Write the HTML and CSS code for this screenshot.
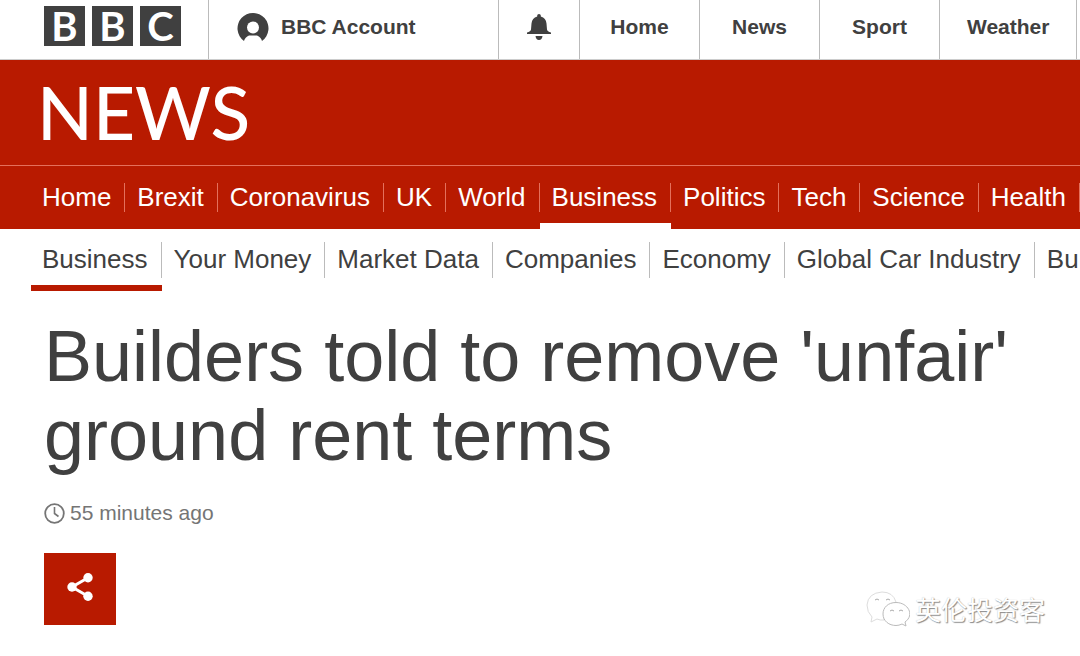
FILE: index.html
```
<!DOCTYPE html>
<html lang="en">
<head>
	<meta charset="utf-8">
	<meta name="viewport" content="width=device-width, initial-scale=1">
	<title>Builders told to remove 'unfair' ground rent terms - BBC News</title>
	<link rel="stylesheet" href="styles.css">
</head>

<body>
	<header>
		<div class="topbar">
			<a class="logo" href="#" aria-label="BBC">
				<span>B</span><span>B</span><span>C</span>
			</a>
			<a class="account" href="#">
				<svg width="32" height="30" viewBox="0 0 32 30" aria-hidden="true">
					<path fill="#404040" d="M7 29A15.500 15.500 0 1 1 25 29Q24 25 20 23.500H12Q8 25 7 29Z"/>
					<circle cx="16" cy="15.500" r="6" fill="#fff"/>
					<path fill="#fff" d="M9 30Q10 24 16 24T23 30Z"/>
				</svg>
				BBC Account
			</a>
			<a class="bell" href="#" aria-label="Notifications">
				<svg width="24" height="26" viewBox="0 0 24 26" aria-hidden="true">
					<path fill="#404040" d="M10.200 2.500V1.500Q10.200 0 12 0T13.800 1.500V2.500Q19 4 19.500 9.500L20 15.500Q20.300 17.500 24 18.500V20H0V18.500Q3.700 17.500 4 15.500L4.500 9.500Q5 4 10.200 2.500ZM8.500 22H15.500Q15 26 12 26T8.500 22Z"/>
				</svg>
			</a>
			<nav class="topnav">
				<a href="#">Home</a>
				<a href="#">News</a>
				<a href="#">Sport</a>
				<a href="#">Weather</a>
			</nav>
		</div>

		<div class="brand"><a href="#">NEWS</a></div>

		<nav class="nav primary">
			<a href="#">Home</a>
			<a href="#">Brexit</a>
			<a href="#">Coronavirus</a>
			<a href="#">UK</a>
			<a href="#">World</a>
			<a class="active" href="#">Business</a>
			<a href="#">Politics</a>
			<a href="#">Tech</a>
			<a href="#">Science</a>
			<a href="#">Health</a>
		</nav>

		<nav class="nav secondary">
			<a class="active" href="#">Business</a>
			<a href="#">Your Money</a>
			<a href="#">Market Data</a>
			<a href="#">Companies</a>
			<a href="#">Economy</a>
			<a href="#">Global Car Industry</a>
			<a href="#">Bu</a>
		</nav>
	</header>

	<main>
		<h1>Builders told to remove 'unfair' ground rent terms</h1>
		<p class="date">
			<svg width="21" height="21" viewBox="0 0 21 21" fill="none" stroke="#757575" aria-hidden="true">
				<circle cx="10.500" cy="10.500" r="9.300" stroke-width="1.800"/>
				<path stroke-width="1.600" d="M10.500 4V10.500L14.500 13.500"/>
			</svg>
			<time>55 minutes ago</time>
		</p>
		<button class="share" type="button" aria-label="Share">
			<svg width="26" height="28" viewBox="0 0 26 28" aria-hidden="true">
				<path fill="none" stroke="#fff" stroke-width="3" d="M21 4.700L5 14L21 23.300"/>
				<circle cx="21" cy="4.700" r="4.700" fill="#fff"/>
				<circle cx="5" cy="14" r="4.700" fill="#fff"/>
				<circle cx="21" cy="23.300" r="4.700" fill="#fff"/>
			</svg>
		</button>
	</main>

	<div class="watermark">
		<svg width="44" height="36" viewBox="0 0 44 36" fill="#fff" aria-hidden="true">
			<path stroke="#ddd" d="M6 26L5 31L11 28Q14 29.500 18 29Q16 15 30 11Q27 1 16 1Q2 2 1 14Q1 21 6 26Z"/>
			<path stroke="#bbb" d="M30 11.500C22 11.500 17 16.500 17 23C17 30 23 34.500 30 34.500Q33 34.500 36 33L40 35L39 31C49 24 42 11.500 30 11.500Z"/>
			<path fill="none" stroke="#aaa" d="M9 9Q11 7 13 9M20 9Q22 7 24 9M24 20Q26 18 28 20M33 20Q35 18 37 20"/>
		</svg>
		<span lang="zh">英伦投资客</span>
	</div>
</body>

</html>
```
FILE: styles.css
```
html {
	box-sizing: border-box;
}
*,
*::before,
*::after {
	box-sizing: inherit;
}

body {
	background-color: #fff;
	color: #404040;
	font-family: "Liberation Sans", Helvetica, Arial, sans-serif;
	font-size: 26px;
	margin: 0;
	overflow-x: hidden;
	position: relative;
}

a {
	color: inherit;
	text-decoration: none;
}

svg {
	display: block;
	flex: none;
}

/* Global bar */
.topbar {
	border-bottom: 1px solid #ccc;
	display: flex;
	font-size: 21px;
	font-weight: bold;
	height: 60px;
	overflow: hidden;
	padding-left: 44px;
}

.topbar a {
	flex: none;
}

.logo {
	display: flex;
	gap: 7px;
	padding-top: 6px;
	width: 164px;
}

.logo span {
	background-color: #404040;
	color: #fff;
	font-family: Lato, sans-serif;
	font-size: 40px;
	height: 40px;
	line-height: 40px;
	text-align: center;
	width: 41px;
}

.account,
.bell,
.topnav a {
	align-items: center;
	border-left: 1px solid #bbb;
	display: flex;
	padding-bottom: 6px;
}

.account {
	gap: 12px;
	padding-left: 28px;
	width: 290px;
}

.bell {
	justify-content: center;
	width: 81px;
}

.topnav {
	border-right: 1px solid #bbb;
	display: flex;
}

.topnav a {
	justify-content: center;
	min-width: 120px;
	padding-left: 27px;
	padding-right: 27px;
}

/* News masthead */
.brand {
	background-color: #b81a00;
	border-bottom: 1px solid #e4705c;
	color: #fff;
	font-family: Lato, sans-serif;
	font-size: 73px;
	font-weight: 500;
	height: 106px;
	line-height: 104px;
	padding-left: 37px;
}

.nav {
	display: flex;
	overflow: hidden;
	padding-left: 31px;
	white-space: nowrap;
}

.nav a {
	border-bottom: 6px solid transparent;
	flex: none;
	padding: 0 14px 0 12px;
	position: relative;
}

.nav a:first-child {
	padding-left: 11px;
}

.nav a::before {
	border-right: 1px solid #bbb;
	content: "";
	position: absolute;
	right: 0;
}

.primary {
	background-color: #b81a00;
	color: #fff;
}

.primary a {
	height: 63px;
	line-height: 62px;
}

.primary a::before {
	border-color: #e4705c;
	height: 29px;
	top: 17px;
}

.primary .active {
	border-color: #fff;
}

.secondary a {
	height: 62px;
	line-height: 60px;
}

.secondary a::before {
	height: 36px;
	top: 13px;
}

.secondary .active {
	border-color: #b81a00;
}

/* Story */
main {
	padding: 26px 44px 31px;
}

h1 {
	font-size: 72px;
	font-weight: normal;
	line-height: 79px;
	margin: 0;
}

.date {
	align-items: center;
	color: #757575;
	display: flex;
	font-size: 21px;
	gap: 5px;
	line-height: 24px;
	margin: 26px 0 28px;
}

.share {
	align-items: center;
	background-color: #b81a00;
	border: 0;
	display: flex;
	height: 72px;
	justify-content: center;
	padding: 0 0 4px;
	width: 72px;
}

.watermark {
	align-items: center;
	bottom: 29px;
	color: #fff;
	display: flex;
	font-family: "Noto Sans CJK SC", sans-serif;
	font-size: 26px;
	gap: 5px;
	line-height: 36px;
	position: absolute;
	right: 35px;
	text-shadow: 1px 1px 1px #888, 0 0 1px #bbb;
}
```
